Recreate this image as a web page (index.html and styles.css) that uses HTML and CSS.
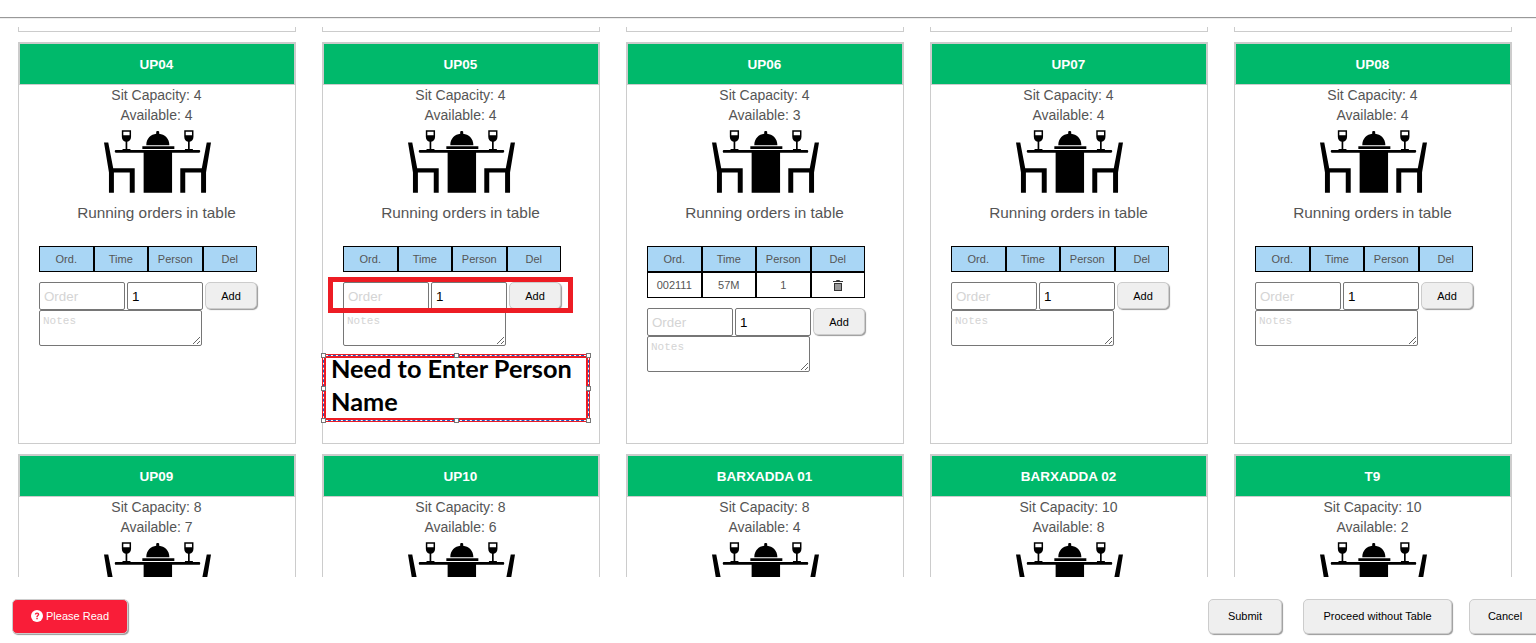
FILE: index.html
```html
<!DOCTYPE html>
<html lang="en">
<head>
    <meta charset="UTF-8">
    <title>Table Selection</title>
    <link rel="stylesheet" href="styles.css">
</head>
<body>
    <svg class="defs" width="0" height="0">
        <symbol id="table-icon" viewBox="0 0 108 64">
            <path d="M0 12.3H4.3L9.3 38.3H31V63H26V42.7H10V63H5V42.7Z"/>
            <path d="M18 0H27.3V6.5C27.3 9.5 25.5 11 23.5 11.5V19H26.7V20H18.7V19H21.8V11.5C19.8 11 18 9.5 18 6.5ZM19.5 1.4V5H25.8V1.4Z" fill-rule="evenodd"/>
            <path d="M108 12.3H103.7L98.7 38.3H77V63H82V42.7H98V63H103V42.7Z"/>
            <path d="M81 0H90.3V6.5C90.3 9.5 88.5 11 86.5 11.5V19H89.7V20H81.7V19H84.8V11.5C82.8 11 81 9.5 81 6.5ZM82.5 1.4V5H88.8V1.4Z" fill-rule="evenodd"/>
            <path d="M12 20H96C97.5 20 97.5 22.7 96 22.7H68.7V63H40V22.7H12C10.5 22.7 10.5 20 12 20Z"/>
            <path d="M38.7 16H71V19H38.7Z"/>
            <path d="M42.7 15C42.7 8 47.5 4 52.7 3.4V1.5C52.7 .3 55.7 .3 55.7 1.5V3.4C61 4 66 8 66 15Z"/>
        </symbol>
    </svg>

    <div class="top-bar"></div>

    <div class="table-list">
        <div class="stub"></div><div class="stub"></div><div class="stub"></div><div class="stub"></div><div class="stub"></div>

        <div class="card">
            <div class="card-title">UP04</div>
            <p class="info">Sit Capacity: 4</p>
            <p class="info">Available: 4</p>
            <svg class="table-icon"><use href="#table-icon"/></svg>
            <p class="running">Running orders in table</p>
            <table class="orders">
                <tr><th>Ord.</th><th>Time</th><th>Person</th><th>Del</th></tr>
            </table>
            <form class="order-form">
                <input class="order-no" placeholder="Order">
                <input class="qty" value="1">
                <button type="button" class="btn add-btn">Add</button>
                <textarea placeholder="Notes"></textarea>
            </form>
        </div>

        <div class="card">
            <div class="card-title">UP05</div>
            <p class="info">Sit Capacity: 4</p>
            <p class="info">Available: 4</p>
            <svg class="table-icon"><use href="#table-icon"/></svg>
            <p class="running">Running orders in table</p>
            <table class="orders">
                <tr><th>Ord.</th><th>Time</th><th>Person</th><th>Del</th></tr>
            </table>
            <form class="order-form">
                <input class="order-no" placeholder="Order">
                <input class="qty" value="1">
                <button type="button" class="btn add-btn">Add</button>
                <textarea placeholder="Notes"></textarea>
            </form>
            <div class="mark-box"></div>
            <div class="note">
                <div class="note-text">Need to Enter Person Name</div>
                <span class="handle h-tl"></span><span class="handle h-tc"></span><span class="handle h-tr"></span>
                <span class="handle h-ml"></span><span class="handle h-mr"></span>
                <span class="handle h-bl"></span><span class="handle h-bc"></span><span class="handle h-br"></span>
            </div>
        </div>

        <div class="card">
            <div class="card-title">UP06</div>
            <p class="info">Sit Capacity: 4</p>
            <p class="info">Available: 3</p>
            <svg class="table-icon"><use href="#table-icon"/></svg>
            <p class="running">Running orders in table</p>
            <table class="orders">
                <tr><th>Ord.</th><th>Time</th><th>Person</th><th>Del</th></tr>
                <tr>
                    <td>002111</td><td>57M</td><td>1</td>
                    <td>
                        <svg class="trash" viewBox="0 0 10 11"><path d="M3.5 0H6.5L7 1H10V2H0V1H3ZM1 3H9V11H1ZM2.5 4V10H3.5V4ZM4.5 4V10H5.5V4ZM6.5 4V10H7.5V4Z" fill-rule="evenodd"/></svg>
                    </td>
                </tr>
            </table>
            <form class="order-form">
                <input class="order-no" placeholder="Order">
                <input class="qty" value="1">
                <button type="button" class="btn add-btn">Add</button>
                <textarea placeholder="Notes"></textarea>
            </form>
        </div>

        <div class="card">
            <div class="card-title">UP07</div>
            <p class="info">Sit Capacity: 4</p>
            <p class="info">Available: 4</p>
            <svg class="table-icon"><use href="#table-icon"/></svg>
            <p class="running">Running orders in table</p>
            <table class="orders">
                <tr><th>Ord.</th><th>Time</th><th>Person</th><th>Del</th></tr>
            </table>
            <form class="order-form">
                <input class="order-no" placeholder="Order">
                <input class="qty" value="1">
                <button type="button" class="btn add-btn">Add</button>
                <textarea placeholder="Notes"></textarea>
            </form>
        </div>

        <div class="card">
            <div class="card-title">UP08</div>
            <p class="info">Sit Capacity: 4</p>
            <p class="info">Available: 4</p>
            <svg class="table-icon"><use href="#table-icon"/></svg>
            <p class="running">Running orders in table</p>
            <table class="orders">
                <tr><th>Ord.</th><th>Time</th><th>Person</th><th>Del</th></tr>
            </table>
            <form class="order-form">
                <input class="order-no" placeholder="Order">
                <input class="qty" value="1">
                <button type="button" class="btn add-btn">Add</button>
                <textarea placeholder="Notes"></textarea>
            </form>
        </div>

        <div class="card">
            <div class="card-title">UP09</div>
            <p class="info">Sit Capacity: 8</p>
            <p class="info">Available: 7</p>
            <svg class="table-icon"><use href="#table-icon"/></svg>
        </div>

        <div class="card">
            <div class="card-title">UP10</div>
            <p class="info">Sit Capacity: 8</p>
            <p class="info">Available: 6</p>
            <svg class="table-icon"><use href="#table-icon"/></svg>
        </div>

        <div class="card">
            <div class="card-title">BARXADDA 01</div>
            <p class="info">Sit Capacity: 8</p>
            <p class="info">Available: 4</p>
            <svg class="table-icon"><use href="#table-icon"/></svg>
        </div>

        <div class="card">
            <div class="card-title">BARXADDA 02</div>
            <p class="info">Sit Capacity: 10</p>
            <p class="info">Available: 8</p>
            <svg class="table-icon"><use href="#table-icon"/></svg>
        </div>

        <div class="card">
            <div class="card-title">T9</div>
            <p class="info">Sit Capacity: 10</p>
            <p class="info">Available: 2</p>
            <svg class="table-icon"><use href="#table-icon"/></svg>
        </div>
    </div>

    <div class="footer">
        <button type="button" class="btn read-btn">
            <svg class="help" viewBox="0 0 12 12"><circle cx="6" cy="6" r="6" fill="#fff"/><path d="M3.8 4.6C3.8 3.3 4.8 2.5 6.1 2.5C7.4 2.5 8.3 3.3 8.3 4.4C8.3 5.8 6.7 5.8 6.7 7H5.3C5.3 5.2 6.8 5.2 6.8 4.4C6.8 4 6.5 3.8 6.1 3.8C5.6 3.8 5.3 4.1 5.2 4.6ZM5.3 7.7H6.8V9.2H5.3Z" fill="#f91d38"/></svg>
            Please Read
        </button>
        <div class="footer-right">
            <button type="button" class="btn submit-btn">Submit</button>
            <button type="button" class="btn proceed-btn">Proceed without Table</button>
            <button type="button" class="btn cancel-btn">Cancel</button>
        </div>
    </div>
</body>
</html>
```

FILE: styles.css
```css
body {
    font-family: "Liberation Sans", Arial, sans-serif;
    background-color: #ffffff;
    color: #555;
    margin: 0;
    padding: 0;
    height: 643px;
    overflow: hidden;
}

.defs {
    display: block;
    height: 0;
}

.top-bar {
    height: 17px;
    border-bottom: 1px solid #999;
    box-shadow: 0 1px 0 #eee;
    margin-bottom: 9px;
}

.table-list {
    display: grid;
    grid-template-columns: repeat(5, 278px);
    grid-template-rows: 5px repeat(2, 402px);
    column-gap: 26px;
    row-gap: 10px;
    padding-left: 18px;
    height: 550px;
    overflow: hidden;
}

.stub {
    border: 1px solid #ccc;
    border-top: none;
}

.card {
    position: relative;
    border: 1px solid #ccc;
    text-align: center;
}

.card-title {
    background-color: #00b96b;
    border: 1px solid #ccc;
    border-width: 1px 0 1px 0;
    box-shadow: inset 1px 0 0 #ccc, inset -1px 0 0 #ccc;
    color: #fff;
    font-size: 13.5px;
    font-weight: bold;
    height: 40px;
    line-height: 41px;
    padding-right: 1px;
}

.info {
    margin: 0;
    padding-right: 1px;
    font-size: 14px;
    line-height: 20px;
}

.table-icon {
    display: block;
    width: 107px;
    height: 64px;
    margin: 5px auto 0 85px;
}

.running {
    margin: 8px 0 22px 0;
    padding-right: 1px;
    font-size: 15.35px;
    line-height: 22px;
}

.orders {
    border-collapse: separate;
    border-spacing: 0;
    margin-left: 20px;
    width: 218px;
    table-layout: fixed;
    font-size: 11px;
}

.orders th,
.orders td {
    border: 1px solid #000;
    padding: 0;
    box-sizing: border-box;
    height: 26px;
    font-weight: normal;
    text-align: center;
}

.orders th {
    background-color: #a9d6f5;
}

.trash {
    width: 10px;
    height: 11px;
    fill: #333;
    vertical-align: middle;
}

.order-form {
    display: flex;
    flex-wrap: wrap;
    align-items: flex-start;
    column-gap: 2px;
    margin: 10px 0 0 20px;
    width: 225px;
}

.order-form input,
.order-form textarea {
    box-sizing: border-box;
    border: 1px solid #767676;
    border-radius: 2px;
    background: #fff;
    margin: 0;
    outline: none;
}

.order-form input {
    height: 28px;
    padding: 1px 4px;
    font-family: "Liberation Sans", Arial, sans-serif;
    font-size: 13.33px;
    color: #000;
}

.order-no {
    width: 86px;
}

.qty {
    width: 76px;
}

.order-form textarea {
    display: block;
    width: 163px;
    height: 36px;
    padding: 4px 3px;
    font-family: "Liberation Mono", monospace;
    font-size: 11px;
}

input::placeholder,
textarea::placeholder {
    color: #d4d4d4;
    opacity: 1;
}

.btn {
    box-sizing: border-box;
    background-color: #efefef;
    border: 1px solid #ccc;
    border-radius: 5px;
    box-shadow: 1px 1px 1px #999;
    color: #000;
    font-family: "Liberation Sans", Arial, sans-serif;
    font-size: 11px;
    padding: 0;
    cursor: pointer;
}

.add-btn {
    width: 52px;
    height: 27px;
}

.mark-box {
    position: absolute;
    left: 5px;
    top: 234px;
    box-sizing: border-box;
    width: 245px;
    height: 36px;
    border: 5px solid #ed1c24;
}

.note {
    position: absolute;
    left: -1px;
    top: 311px;
    box-sizing: border-box;
    width: 268px;
    height: 68px;
    border: 4px solid #ed1c24;
    background-color: #fff;
}

.note::before,
.note::after {
    content: "";
    position: absolute;
    left: -3px;
    top: -3px;
    right: -3px;
    bottom: -3px;
    border: 1px solid #fff;
}

.note::after {
    border: 1px dashed #1f5fc4;
}

.note-text {
    margin-top: -6px;
    padding-left: 5px;
    color: #000;
    font-family: "Lato", sans-serif;
    font-size: 25.3px;
    font-weight: bold;
    line-height: 33px;
    text-align: left;
}

.handle {
    position: absolute;
    z-index: 1;
    width: 3px;
    height: 3px;
    border: 1px solid #777;
    background-color: #fff;
}

.h-tl { left: -5px; top: -5px; }
.h-tc { left: 128px; top: -5px; }
.h-tr { right: -5px; top: -5px; }
.h-ml { left: -5px; top: 28px; }
.h-mr { right: -5px; top: 28px; }
.h-bl { left: -5px; bottom: -5px; }
.h-bc { left: 128px; bottom: -5px; }
.h-br { right: -5px; bottom: -5px; }

.footer {
    display: flex;
    align-items: flex-start;
    padding: 22px 0 0 12px;
}

.footer .btn {
    height: 35px;
    padding-bottom: 2px;
    flex-shrink: 0;
}

.read-btn {
    width: 116px;
    background-color: #f91d38;
    color: #fff;
}

.help {
    width: 12px;
    height: 12px;
    vertical-align: -2px;
}

.footer-right {
    display: flex;
    margin-left: auto;
    margin-right: -5px;
}

.submit-btn {
    width: 74px;
    margin-right: 21px;
}

.proceed-btn {
    width: 149px;
    margin-right: 17px;
}

.cancel-btn {
    width: 72px;
}
```
